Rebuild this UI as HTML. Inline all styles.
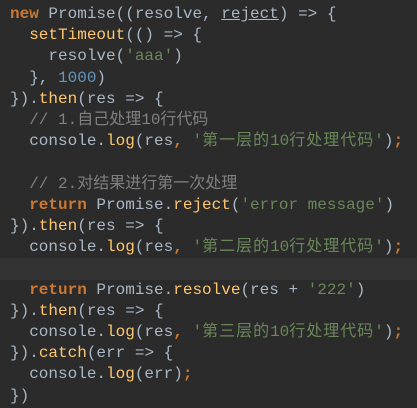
<!DOCTYPE html>
<html><head><meta charset="utf-8"><style>
html,body{margin:0;padding:0;background:#2b2b2b;width:417px;height:408px;overflow:hidden}
pre{margin:0;padding:4px 0 0 10px;font-family:"Liberation Mono","Noto Sans CJK SC",monospace;font-size:16px;line-height:21.2px;color:#a9b7c6;position:relative}
.k{color:#cc7832;font-weight:bold}.f{color:#ffc66d}.s{color:#6a8759}.n{color:#6897bb}.c{color:#808080}
.z{letter-spacing:1px}
.hl{position:absolute;left:0;top:258px;width:417px;height:22px;background:#323232}
.u{text-decoration:underline}
</style></head><body><div class="hl"></div><pre style="z-index:1"><span class="k">new</span> Promise((resolve, <span class="u">reject</span>) =&gt; {
  <span class="f">setTimeout</span>(() =&gt; {
    resolve(<span class="s">'aaa'</span>)
  }, <span class="n">1000</span>)
}).<span class="f">then</span>(res =&gt; {
  <span class="c">// 1.自己处理10行代码</span>
  console.<span class="f">log</span>(res<span class="k">,</span> <span class="s">'<span class="z">第一层的</span>10<span class="z">行处理代码</span>'</span>)<span class="k">;</span>

  <span class="c">// 2.对结果进行第一次处理</span>
  <span class="k">return</span> Promise.<span class="f">reject</span>(<span class="s">'error message'</span>)
}).<span class="f">then</span>(res =&gt; {
  console.<span class="f">log</span>(res<span class="k">,</span> <span class="s">'<span class="z">第二层的</span>10<span class="z">行处理代码</span>'</span>)<span class="k">;</span>

  <span class="k">return</span> Promise.<span class="f">resolve</span>(res + <span class="s">'222'</span>)
}).<span class="f">then</span>(res =&gt; {
  console.<span class="f">log</span>(res<span class="k">,</span> <span class="s">'<span class="z">第三层的</span>10<span class="z">行处理代码</span>'</span>)<span class="k">;</span>
}).<span class="f">catch</span>(err =&gt; {
  console.<span class="f">log</span>(err)<span class="k">;</span>
})</pre></body></html>
